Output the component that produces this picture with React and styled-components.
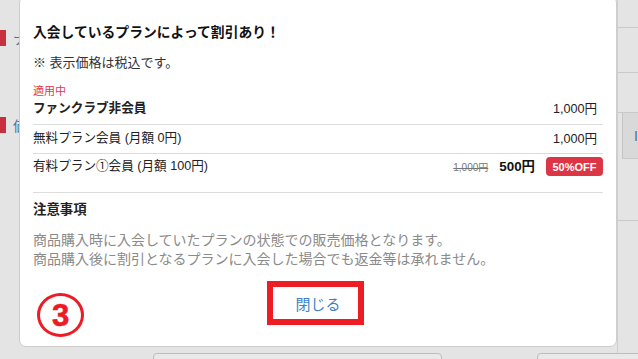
import styled, { createGlobalStyle } from "styled-components";

const GlobalStyles = createGlobalStyle`
  body {
    margin: 0;
    padding: 0;
    background-color: #e4e4e4;
    font-family: "Liberation Sans", "Noto Sans CJK JP", sans-serif;
  }
`;

const Page = styled.div`
  position: relative;
  width: 638px;
  height: 359px;
  overflow: hidden;
  background-color: #e4e4e4;
  display: flex;
  flex-direction: column;
`;

/* dimmed page behind the dialog */
const Backdrop = styled.div`
  flex: 1;
  display: flex;
`;

const LeftStrip = styled.div`
  width: 19px;
  display: flex;
  flex-direction: column;
  gap: 71px;
  padding-top: 30px;
`;

const Tag = styled.div`
  display: flex;
  align-items: center;
  gap: 7px;
  height: 16px;

  &::before {
    content: "";
    flex: none;
    width: 6px;
    height: 16px;
    background-color: #c9303f;
  }
`;

const TagText = styled.span`
  font-size: 14px;
  color: #4a6fa8;
  white-space: nowrap;
`;

const Middle = styled.div`
  flex: 1;
`;

const RightStrip = styled.div`
  width: 20px;
  border-left: 1px solid #cfcfcf;
  display: flex;
  flex-direction: column;
`;

const StripRow = styled.div`
  height: ${(p) => p.h}px;
  border-bottom: 1px solid #c9c9c9;
  box-sizing: border-box;
`;

const StripCell = styled.div`
  height: 46px;
  margin-left: 4px;
  border-left: 1px solid #c4c4c4;
  border-bottom: 1px solid #c9c9c9;
  background-color: #d9d9d9;
  box-sizing: border-box;
  display: flex;
  align-items: center;
  justify-content: flex-end;
  font-size: 14px;
  color: #4a6fa8;
`;

const BottomRow = styled.div`
  height: 6px;
  display: flex;
  padding-left: 153px;
  gap: 95px;
`;

const GhostButton = styled.div`
  flex: none;
  width: ${(p) => p.w}px;
  height: 20px;
  border: 1px solid #bdbdbd;
  border-radius: 4px;
  background-color: #e9e9e9;
  box-sizing: border-box;
`;

/* dialog */
const Dialog = styled.div`
  position: absolute;
  left: 19px;
  top: -4px;
  width: 598px;
  height: 351px;
  box-sizing: border-box;
  background-color: #fff;
  border: 1px solid #cdcdcd;
  border-radius: 7px;
  padding: 26px 13px 0;
  color: #222;
`;

const Title = styled.h2`
  margin: 0;
  font-size: 13.8px;
  line-height: 20px;
  font-weight: bold;
  color: #111;
`;

const TaxNote = styled.p`
  margin: 11px 0 0;
  font-size: 13px;
  line-height: 18px;
  color: #333;
`;

const PlanList = styled.div`
  margin-top: 12px;
  padding-bottom: 14px;
  border-bottom: 1px solid #dcdcdc;
`;

const PlanRow = styled.div`
  display: flex;
  align-items: ${(p) => (p.current ? "flex-end" : "center")};
  justify-content: space-between;
  padding: ${(p) => (p.current ? "0 0 6px" : p.last ? "3px 0 2px" : "4px 0 5px")};
  border-bottom: ${(p) => (p.last ? "none" : "1px solid #dcdcdc")};
`;

const PlanName = styled.div`
  display: flex;
  flex-direction: column;
  font-size: 12.6px;
  line-height: 19px;
  font-weight: ${(p) => (p.bold ? "bold" : "normal")};
  color: #222;
`;

const CurrentLabel = styled.span`
  font-size: 11px;
  line-height: 15px;
  color: #e03a4a;
  font-weight: normal;
`;

const PriceGroup = styled.div`
  display: flex;
  align-items: center;
  gap: 11px;
`;

const Price = styled.span`
  font-size: ${(p) => (p.strong ? "13.4px" : "12.6px")};
  line-height: 18px;
  font-weight: ${(p) => (p.strong ? "bold" : "normal")};
  color: ${(p) => (p.strong ? "#111" : "#222")};
  padding-right: ${(p) => (p.pad ? "6px" : "0")};
`;

const OldPrice = styled.span`
  font-size: 10px;
  color: #777;
  text-decoration: line-through;
`;

const OffBadge = styled.span`
  display: inline-flex;
  align-items: center;
  justify-content: center;
  width: 57px;
  height: 19px;
  border-radius: 4px;
  background-color: #dc3545;
  color: #fff;
  font-size: 11px;
  font-weight: bold;
`;

const NoticeTitle = styled.h3`
  margin: 7px 0 0;
  font-size: 13.4px;
  line-height: 20px;
  font-weight: bold;
  color: #222;
`;

const NoticeText = styled.p`
  margin: 11px 0 0;
  font-size: 14px;
  line-height: 19px;
  color: #8a8a8a;
`;

const Footer = styled.div`
  margin-top: 26px;
  display: flex;
  justify-content: center;
`;

const CloseButton = styled.button`
  border: none;
  background: none;
  padding: 0;
  font-family: inherit;
  font-size: 15px;
  line-height: 20px;
  color: #3f80c4;
  cursor: pointer;
`;

/* annotation marks laid over the dialog */
const Highlight = styled.div`
  position: absolute;
  left: 247px;
  top: 284px;
  width: 97px;
  height: 44px;
  box-sizing: border-box;
  border: 6px solid #ee1c25;
`;

const StepMark = styled.div`
  position: absolute;
  left: 17px;
  top: 296px;
  width: 47px;
  height: 44px;
  box-sizing: border-box;
  border: 3.5px solid #ec1c24;
  border-radius: 50%;
  display: flex;
  align-items: center;
  justify-content: center;
  color: #ec1c24;
  font-size: 31px;
  font-weight: bold;
  line-height: 1;
  -webkit-text-stroke: 0.6px #ec1c24;
`;

const plans = [
  { name: "無料プラン会員 (月額 0円)", price: "1,000円" },
];

export default function App() {
  return (
    <Page>
      <GlobalStyles />
      <Backdrop>
        <LeftStrip>
          <Tag>
            <TagText>ナ</TagText>
          </Tag>
          <Tag>
            <TagText>価</TagText>
          </Tag>
        </LeftStrip>
        <Middle />
        <RightStrip>
          <StripRow h={28} />
          <StripRow h={45} />
          <StripRow h={40} />
          <StripCell>I</StripCell>
          <StripRow h={62} />
        </RightStrip>
      </Backdrop>
      <BottomRow>
        <GhostButton w={289} />
        <GhostButton w={120} />
      </BottomRow>

      <Dialog>
        <Title>入会しているプランによって割引あり！</Title>
        <TaxNote>※ 表示価格は税込です。</TaxNote>
        <PlanList>
          <PlanRow current>
            <PlanName bold>
              <CurrentLabel>適用中</CurrentLabel>
              ファンクラブ非会員
            </PlanName>
            <Price pad>1,000円</Price>
          </PlanRow>
          {plans.map((plan) => (
            <PlanRow key={plan.name}>
              <PlanName>{plan.name}</PlanName>
              <Price pad>{plan.price}</Price>
            </PlanRow>
          ))}
          <PlanRow last>
            <PlanName>有料プラン①会員 (月額 100円)</PlanName>
            <PriceGroup>
              <OldPrice>1,000円</OldPrice>
              <Price strong>500円</Price>
              <OffBadge>50%OFF</OffBadge>
            </PriceGroup>
          </PlanRow>
        </PlanList>
        <NoticeTitle>注意事項</NoticeTitle>
        <NoticeText>
          商品購入時に入会していたプランの状態での販売価格となります。
          <br />
          商品購入後に割引となるプランに入会した場合でも返金等は承れません。
        </NoticeText>
        <Footer>
          <CloseButton>閉じる</CloseButton>
        </Footer>
        <Highlight />
        <StepMark>3</StepMark>
      </Dialog>
    </Page>
  );
}
